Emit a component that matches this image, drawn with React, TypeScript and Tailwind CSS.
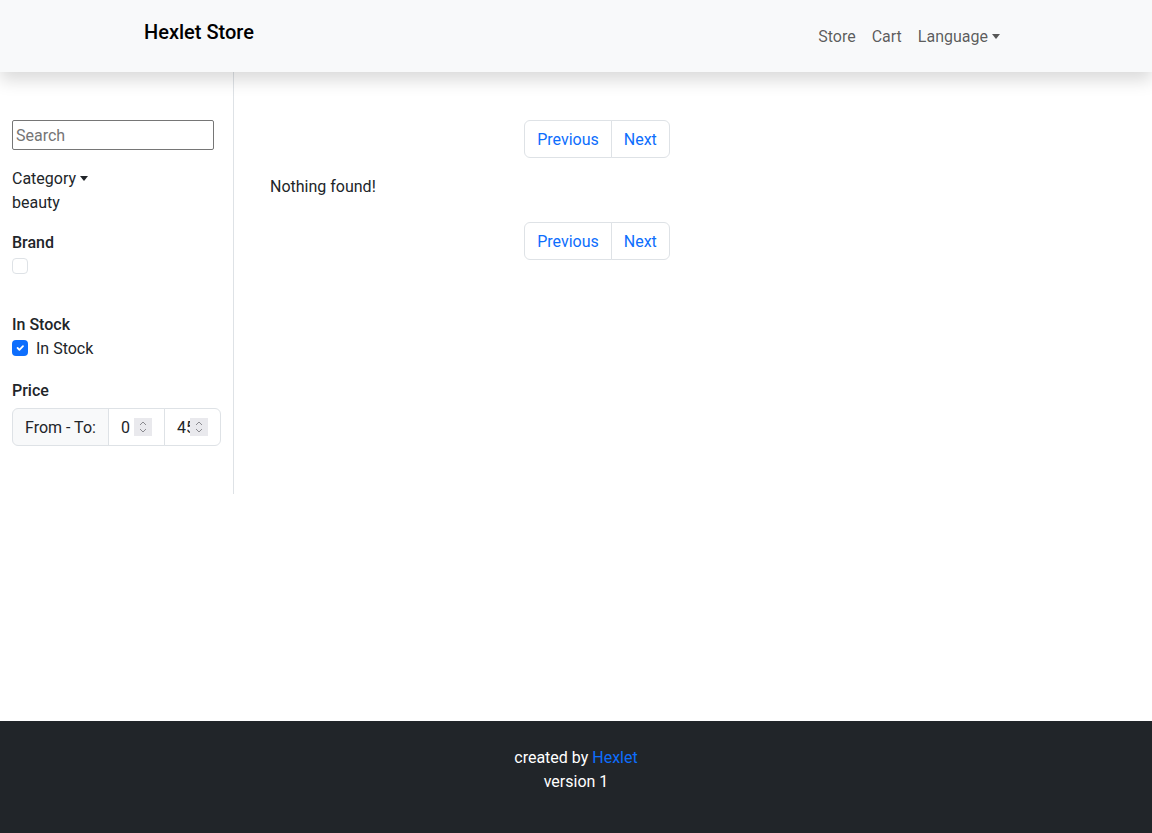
// text lines sit 1px lower in the line box than the default Roboto metrics give
const line = "pt-[2px] pb-0 leading-[22px]";

const Caret = () => (
  <span className="ml-1 inline-block border-x-4 border-t-[5px] border-x-transparent border-t-current align-[3px]" />
);

const Spinner = () => (
  <span className="absolute right-3 top-[9px] flex h-[18px] w-[18px] flex-col items-center justify-center bg-[#e9e9ed]">
    <svg viewBox="0 0 10 14" className="h-[14px] w-[10px]">
      <path d="M2 5l3-3 3 3M2 9l3 3 3-3" fill="none" stroke="#8a8a8f" strokeWidth="1" />
    </svg>
  </span>
);

const NumberField = ({ value, last }: { value: string; last?: boolean }) => (
  <div
    className={`relative -ml-px flex h-[38px] w-[57px] shrink-0 items-center overflow-hidden border border-[#dee2e6] bg-white px-3 ${
      last ? "rounded-r-[6px]" : ""
    }`}
  >
    <span className={`${line} text-[#212529]`}>{value}</span>
    <Spinner />
  </div>
);

const Pagination = () => (
  <div className="flex justify-center">
    <ul className="flex">
      <li className="rounded-l-[6px] border border-[#dee2e6] px-3 pt-[8px] pb-[6px] leading-[22px] text-[#0d6efd]">
        Previous
      </li>
      <li className="-ml-px rounded-r-[6px] border border-[#dee2e6] px-3 pt-[8px] pb-[6px] leading-[22px] text-[#0d6efd]">
        Next
      </li>
    </ul>
  </div>
);

const Sidebar = () => (
  <aside className="w-[234px] shrink-0 self-start border-r border-[#dee2e6] px-3 pt-12 pb-12">
    <input
      className="block h-[30px] w-[202px] rounded-[2px] border border-[#767676] px-[3px] text-base placeholder:text-[#757575] focus:outline-none"
      placeholder="Search"
    />

    <div className={`mt-4 ${line}`}>
      Category
      <Caret />
    </div>
    <div className={line}>beauty</div>

    <div className={`mt-4 font-medium ${line}`}>Brand</div>
    <div className="flex h-6 items-center">
      <span className="h-4 w-4 rounded-[4px] border border-[#dee2e6] bg-white" />
    </div>

    <div className={`mt-[34px] font-medium ${line}`}>In Stock</div>
    <label className="flex h-6 items-center gap-2">
      <span className="flex h-4 w-4 items-center justify-center rounded-[4px] bg-[#0d6efd]">
        <svg viewBox="0 0 20 20" className="h-3 w-3">
          <path
            d="M6 10l3 3 6-6"
            fill="none"
            stroke="#fff"
            strokeWidth="3"
            strokeLinecap="round"
            strokeLinejoin="round"
          />
        </svg>
      </span>
      <span className={line}>In Stock</span>
    </label>

    <div className={`mt-[18px] font-medium ${line}`}>Price</div>
    <div className="mt-[6px] flex h-[38px] w-[209px]">
      <span className="flex h-[38px] w-[97px] shrink-0 items-center whitespace-nowrap rounded-l-[6px] border border-[#dee2e6] bg-[#f8f9fa] px-3">
        <span className={line}>From - To:</span>
      </span>
      <NumberField value="0" />
      <NumberField value="45" last />
    </div>
  </aside>
);

export default function App() {
  return (
    <div className="flex min-h-screen flex-col bg-white font-['Roboto',sans-serif] text-base text-[#212529]">
      <header className="relative z-10 h-[72px] bg-[#f8f9fa] shadow-[0_8px_16px_rgba(0,0,0,0.15)]">
        <div className="flex">
          <a className="ml-[144px] pt-[17px] text-[20px] font-medium leading-[30px] text-black">
            Hexlet Store
          </a>
          <nav className="ml-auto mr-[144px] flex pt-[25px] leading-6 text-black/65">
            <a className="px-2">Store</a>
            <a className="px-2">Cart</a>
            <a className="px-2">
              Language
              <Caret />
            </a>
          </nav>
        </div>
      </header>

      <main className="flex flex-1">
        <Sidebar />
        <section className="ml-9 w-[654px] pt-12">
          <Pagination />
          <p className={`mt-4 ${line}`}>Nothing found!</p>
          <div className="mt-6">
            <Pagination />
          </div>
        </section>
      </main>

      <footer className="h-[112px] bg-[#212529] pt-[25px] text-center leading-6 text-white">
        <div>
          created by <a className="text-[#0d6efd]">Hexlet</a>
        </div>
        <div>version 1</div>
      </footer>
    </div>
  );
}
